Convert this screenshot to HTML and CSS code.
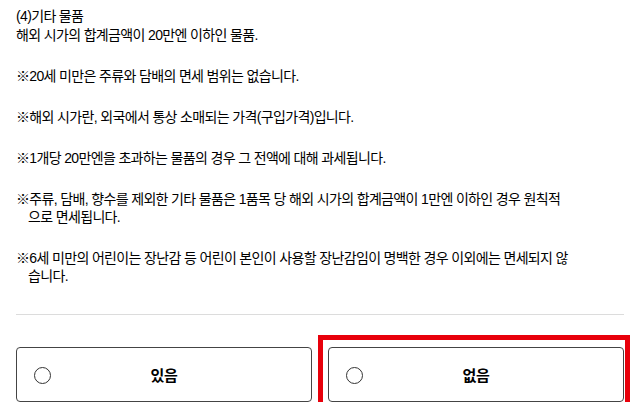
FILE: index.html
```html
<!DOCTYPE html>
<html lang="ko">
<head>
<meta charset="utf-8">
<link rel="stylesheet" href="styles.css">
</head>
<body>
<div class="page">
  <div class="intro">
    <p>(4)기타 물품</p>
    <p>해외 시가의 합계금액이 20만엔 이하인 물품.</p>
  </div>
  <p class="note">※20세 미만은 주류와 담배의 면세 범위는 없습니다.</p>
  <p class="note">※해외 시가란, 외국에서 통상 소매되는 가격(구입가격)입니다.</p>
  <p class="note">※1개당 20만엔을 초과하는 물품의 경우 그 전액에 대해 과세됩니다.</p>
  <p class="note">※주류, 담배, 향수를 제외한 기타 물품은 1품목 당 해외 시가의 합계금액이 1만엔 이하인 경우 원칙적<br>으로 면세됩니다.</p>
  <p class="note">※6세 미만의 어린이는 장난감 등 어린이 본인이 사용할 장난감임이 명백한 경우 이외에는 면세되지 않<br>습니다.</p>
  <hr class="divider">
  <div class="choices">
    <label class="choice"><span class="radio"></span><span class="label">있음</span></label>
    <label class="choice selected"><span class="radio"></span><span class="label">없음</span><span class="highlight"></span></label>
  </div>
</div>
</body>
</html>
```
FILE: styles.css
```css
html, body { margin: 0; padding: 0; background: #fff; }
body {
  font-family: "Liberation Sans", "Noto Sans CJK KR", sans-serif;
  color: #000;
  font-size: 14px;
  letter-spacing: -0.65px;
}
.page { padding: 7px 7px 0 16px; }
p { margin: 0; }
.intro p { line-height: 19px; }
.intro { margin-bottom: 22px; }
.note {
  line-height: 18px;
  margin-bottom: 23px;
  padding-left: 12px;
  text-indent: -12px;
}
.divider {
  border: 0;
  border-top: 1px solid #dcdcdc;
  margin: 29px 0 0 0;
}
.choices {
  display: grid;
  grid-template-columns: 1fr 1fr;
  gap: 16px;
  margin-top: 32px;
}
.choice {
  position: relative;
  height: 55px;
  border: 1px solid #444;
  border-radius: 4px;
  box-sizing: border-box;
  display: flex;
  align-items: center;
  justify-content: center;
}
.radio {
  position: absolute;
  left: 17px;
  top: 19px;
  width: 15px;
  height: 15px;
  border: 1px solid #333;
  border-radius: 50%;
}
.label { font-weight: bold; font-size: 15px; letter-spacing: -0.3px; }
.highlight {
  position: absolute;
  left: -11px;
  top: -13px;
  right: -7px;
  bottom: -11px;
  border: 5px solid #e8000b;
}
```
